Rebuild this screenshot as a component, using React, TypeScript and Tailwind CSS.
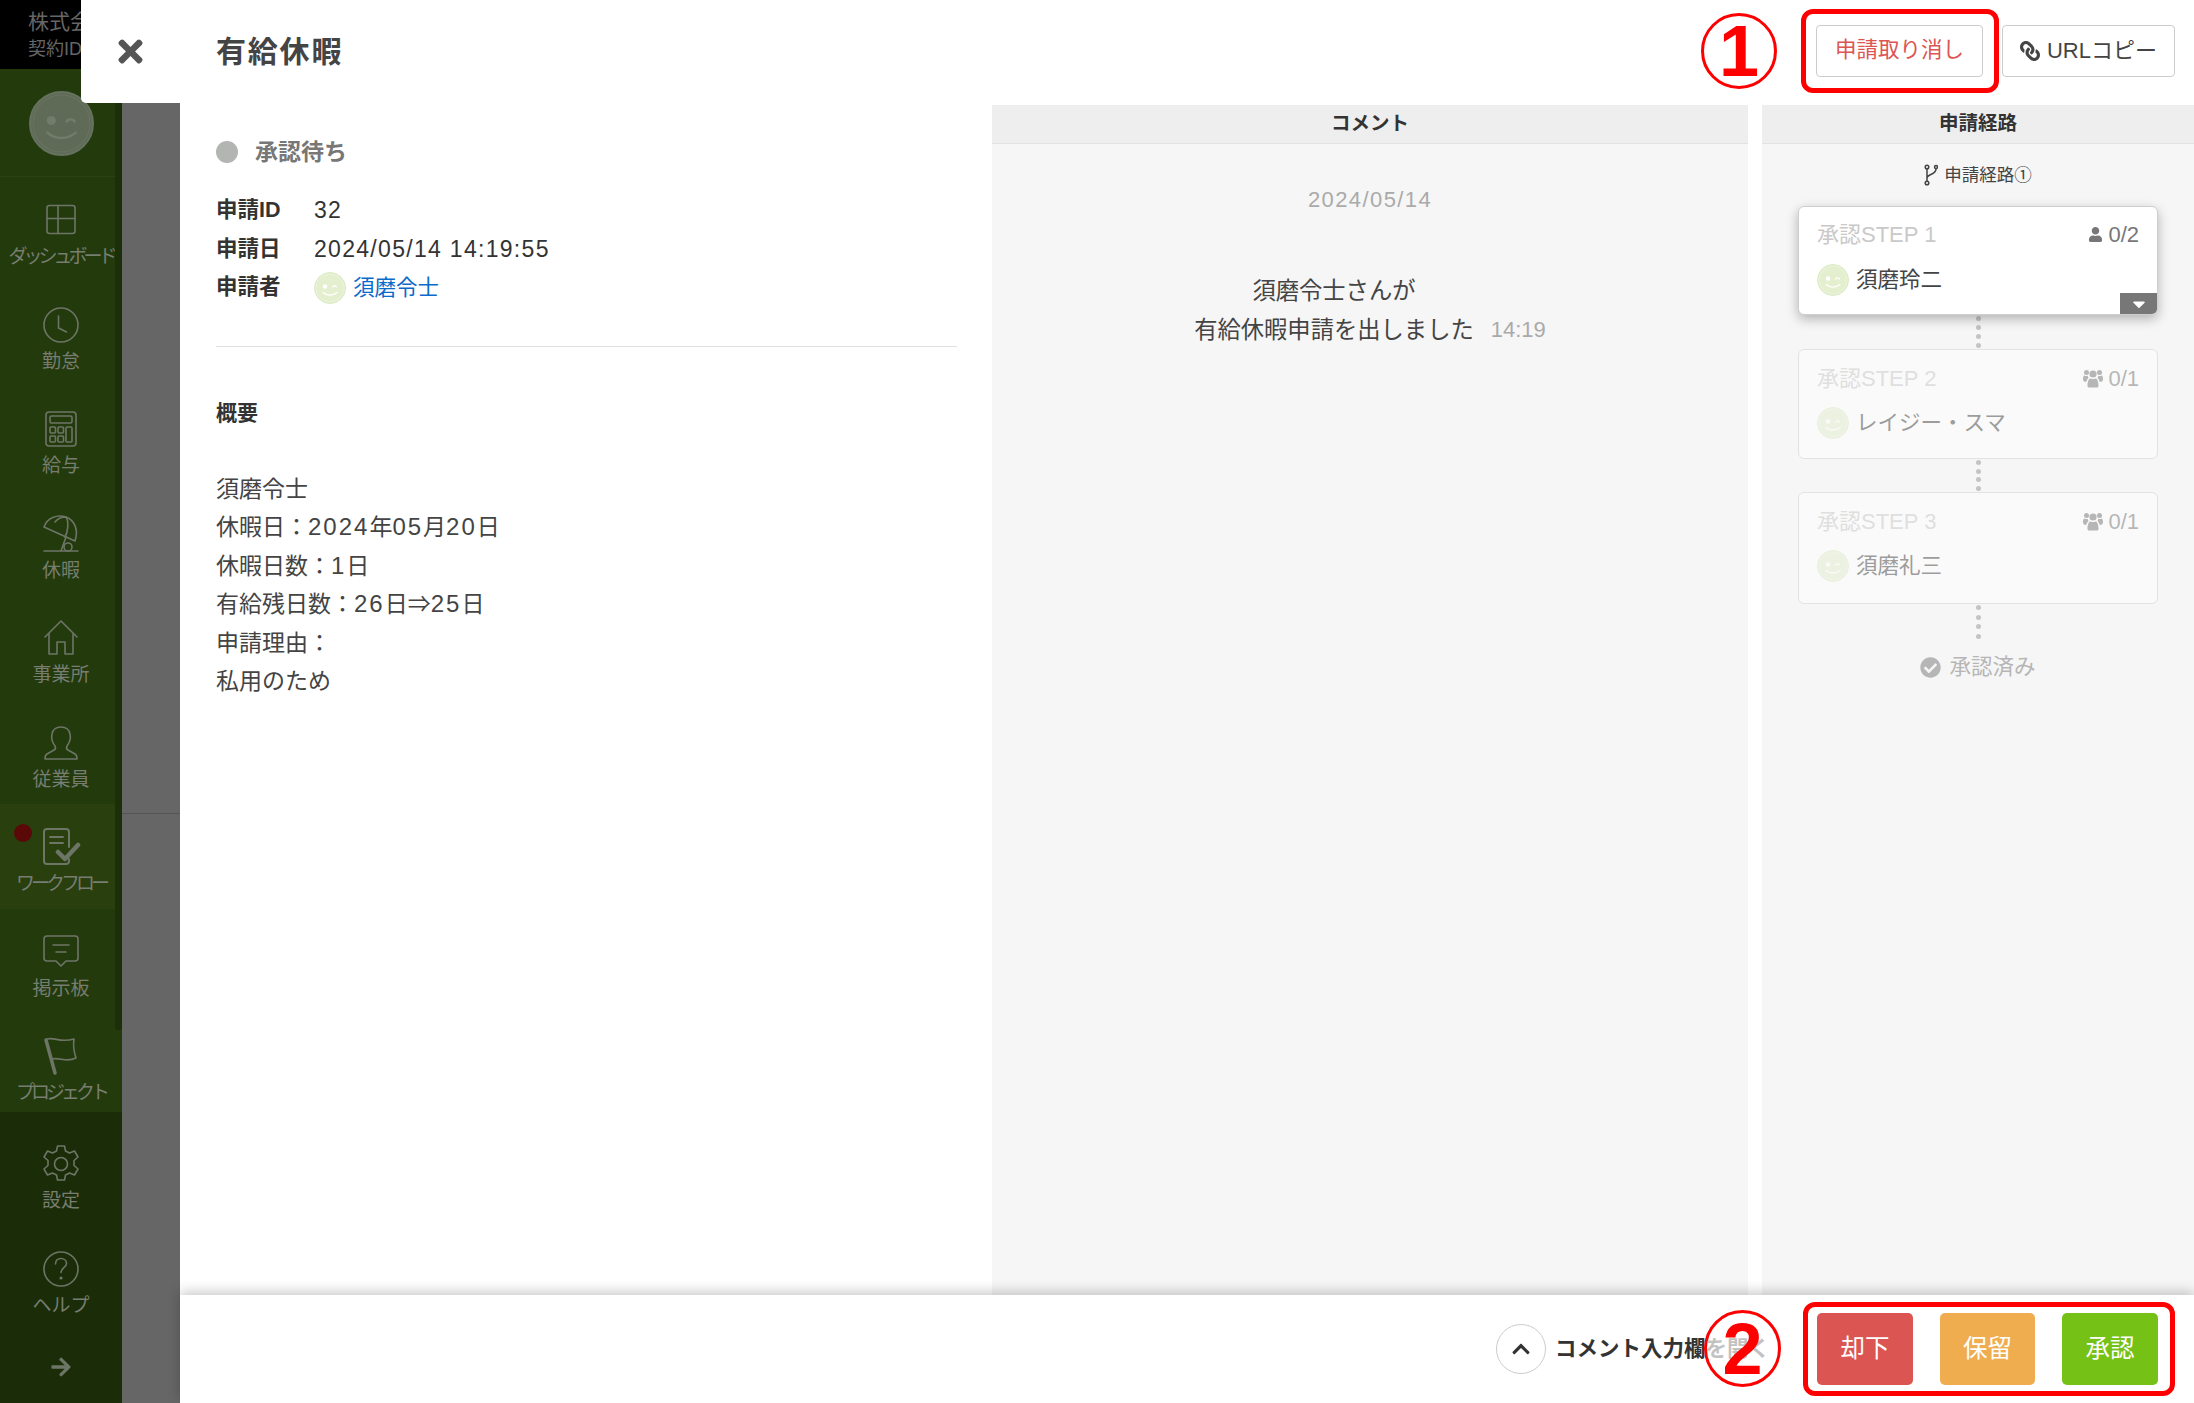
import { FaTimes, FaLink, FaUser, FaCheckCircle, FaChevronUp, FaArrowRight, FaCaretDown } from "react-icons/fa";

function Smile({ size, light = false }: { size: number; light?: boolean }) {
  const bg = light ? "#e4efcf" : "#5f6b57";
  const ring = light ? "#dcebc4" : "#667260";
  const fg = light ? "#ffffff" : "#717c6a";
  return (
    <svg width={size} height={size} viewBox="0 0 64 64" className="shrink-0">
      <circle cx="32" cy="32" r="31" fill={bg} stroke={ring} strokeWidth="2" />
      <circle cx="32" cy="32" r="28" fill="none" stroke={fg} strokeWidth="1" opacity="0.5" />
      <circle cx="22" cy="29" r="4.5" fill={fg} />
      <path d="M37 30c2-3 6-3 8 0" fill="none" stroke={fg} strokeWidth="2.5" strokeLinecap="round" />
      <path d="M18 41c8 7 20 7 28 0" fill="none" stroke={fg} strokeWidth="2.5" strokeLinecap="round" />
    </svg>
  );
}

function Users() {
  return (
    <svg width="20" height="19" viewBox="0 0 20 19" fill="currentColor">
      <circle cx="10" cy="5" r="3.600" />
      <path d="M4.500 17c0-5 1.500-7.500 3-7.500 1 .8 4 .8 5 0 1.500 0 3 2.500 3 7.500 0 1-1 1.500-2 1.500H6.500c-1 0-2-.5-2-1.500Z" />
      <circle cx="3.500" cy="3.500" r="2.500" />
      <circle cx="16.500" cy="3.500" r="2.500" />
      <path d="M0 10c0-2 .7-3.500 1.500-3.500.8.600 2.500.6 3.300.3-.1 1 .2 1.800.8 2.300C4.500 9.800 3.500 11.500 3.300 13 1 13 0 12 0 10Z" />
      <path d="M20 10c0-2-.7-3.500-1.500-3.500-.8.600-2.500.6-3.300.3.100 1-.2 1.800-.8 2.300 1.100.7 2.100 2.400 2.300 3.900 2.300 0 3.300-1 3.300-3Z" />
    </svg>
  );
}

const ic = { fill: "none", stroke: "#6d7567", strokeWidth: 1.6, strokeLinecap: "round" as const, strokeLinejoin: "round" as const };

const icons: Record<string, React.ReactNode> = {
  dash: (
    <svg width="40" height="40" viewBox="0 0 40 40" {...ic}>
      <rect x="6" y="5.5" width="28" height="28" rx="2.5" />
      <path d="M17 5.5v13M6 18.5h28M17 18.5v15" />
    </svg>
  ),
  clock: (
    <svg width="40" height="40" viewBox="0 0 40 40" {...ic}>
      <circle cx="20" cy="20" r="17" />
      <path d="M17.5 11v12l8 4" />
    </svg>
  ),
  calc: (
    <svg width="40" height="40" viewBox="0 0 40 40" {...ic}>
      <rect x="5" y="3" width="30" height="34" rx="3" />
      <rect x="9" y="7" width="22" height="7" rx="1.5" />
      <rect x="9" y="18" width="5.5" height="6" rx="1" />
      <rect x="17" y="18" width="5.5" height="6" rx="1" />
      <rect x="9" y="27" width="5.5" height="6" rx="1" />
      <rect x="17" y="27" width="5.5" height="6" rx="1" />
      <rect x="25" y="18" width="6" height="15" rx="1" />
    </svg>
  ),
  beach: (
    <svg width="40" height="40" viewBox="0 0 40 40" {...ic}>
      <path d="M3 13C6 4 16 0 25 3c8 3 13 12 9 24Z" />
      <path d="M14 8c3-4 8-5 11-5 3 4 2 15-1 20M20 37l5-14M3 37h34" />
      <circle cx="27" cy="33" r="4" />
    </svg>
  ),
  home: (
    <svg width="40" height="40" viewBox="0 0 40 40" {...ic}>
      <path d="M4 19 20 3l16 16" />
      <path d="M8 16v20h8V24h8v12h8V16" />
    </svg>
  ),
  user: (
    <svg width="40" height="40" viewBox="0 0 40 40" {...ic}>
      <path d="M14 23c-3-4-4-8-3-12 1-5 5-7 9-7s8 2 9 7c1 4 0 8-3 12-1 2-1 3 1 4l7 4c2 1 2 3 2 5H4c0-2 0-4 2-5l7-4c2-1 2-2 1-4Z" />
    </svg>
  ),
  flow: (
    <svg width="40" height="40" viewBox="0 0 40 40" fill="none" stroke="#6d7567" strokeLinecap="round" strokeLinejoin="round">
      <path d="M28 20V5a3 3 0 0 0-3-3H6a3 3 0 0 0-3 3v29a3 3 0 0 0 3 3h19a3 3 0 0 0 3-3v-2" strokeWidth="2" />
      <path d="M9 10h13M9 16h13" strokeWidth="2" />
      <path d="M17 25l7 7 13-14" strokeWidth="4.500" />
    </svg>
  ),
  board: (
    <svg width="40" height="40" viewBox="0 0 40 40" {...ic}>
      <path d="M6 4h28a3 3 0 0 1 3 3v19a3 3 0 0 1-3 3H25l-5 5-5-5H6a3 3 0 0 1-3-3V7a3 3 0 0 1 3-3Z" />
      <path d="M12 13h16M15 20h10" />
    </svg>
  ),
  flag: (
    <svg width="40" height="40" viewBox="0 0 40 40" fill="none" stroke="#6d7567" strokeLinecap="round" strokeLinejoin="round">
      <path d="M5 4l9 33" strokeWidth="3.500" />
      <path d="M6 3c8-2 13 4 27 0-1 6 0 13 2 19-10 5-16-1-24 1" strokeWidth="1.600" />
    </svg>
  ),
  gear: (
    <svg width="40" height="40" viewBox="0 0 40 40" {...ic}>
      <circle cx="20" cy="20" r="6.500" />
      <path d="M16.500 2h7l1 5 4 2 5-2 3.500 6-4 3.500v5l4 3.500-3.500 6-5-2-4 2-1 5h-7l-1-5-4-2-5 2-3.500-6 4-3.500v-5l-4-3.500 3.500-6 5 2 4-2z" />
    </svg>
  ),
  help: (
    <svg width="40" height="40" viewBox="0 0 40 40" {...ic}>
      <circle cx="20" cy="20" r="17" />
      <path d="M14.500 15c0-3.500 2.500-5.500 5.500-5.500s5.500 2 5.500 5c0 4-5.500 4.500-5.500 9" />
      <circle cx="20" cy="29" r="0.8" />
    </svg>
  ),
};

function NavItem({ icon, label, squeeze = false, active = false, dot = false }: { icon: string; label: string; squeeze?: boolean; active?: boolean; dot?: boolean }) {
  return (
    <div className={`relative h-[104.5px] shrink-0 flex flex-col items-center pl-[7px] pt-[23px] gap-[5px] ${active ? "bg-[#293f0e]" : ""}`}>
      {dot && <span className="absolute left-[14px] top-[20px] w-[18px] h-[18px] rounded-full bg-[#5a0808]" />}
      {icons[icon]}
      <span className={`text-[19px] leading-[24px] whitespace-nowrap text-[#777d70] ${squeeze ? "tracking-[-4px]" : ""}`}>{label}</span>
    </div>
  );
}

function Dots({ h, n = 4 }: { h: string; n?: number }) {
  return (
    <div className={`${h} flex flex-col items-center justify-between py-[1px]`}>
      {Array.from({ length: n }).map((_, i) => (
        <span key={i} className="w-[5px] h-[5px] rounded-full bg-[#c4c4c4]" />
      ))}
    </div>
  );
}

function Step({ title, count, name, group, faint, h }: { title: string; count: string; name: string; group?: boolean; faint?: boolean; h: string }) {
  return (
    <div className={`${h} w-[360px] relative bg-white rounded-[6px] border border-[#cfcfcf] px-[18px] ${faint ? "opacity-50 pt-[15px]" : "pt-[14px] shadow-[0_4px_12px_rgba(0,0,0,0.28)]"}`}>
      <div className="flex items-center justify-between h-[26px]">
        <span className="text-[22px] text-[#c9c9c9] whitespace-nowrap">{title}</span>
        <span className="flex items-center gap-[5px] text-[22px] text-[#777]">
          {group ? <Users /> : <FaUser size={15} />}
          {count}
        </span>
      </div>
      <div className={`flex items-center gap-[7px] ${faint ? "mt-[16px]" : "mt-[17px]"}`}>
        <Smile size={32} light />
        <span className="text-[21.500px] text-[#444] whitespace-nowrap">{name}</span>
      </div>
      {!faint && (
        <span className="absolute right-0 bottom-0 w-[37px] h-[21px] bg-[#777] rounded-br-[5px] flex items-center justify-center text-white">
          <FaCaretDown size={20} />
        </span>
      )}
    </div>
  );
}

function BodyLine({ text }: { text: string }) {
  return (
    <p>
      {text.split(/(\d+)/).map((part, i) =>
        i % 2 === 1 ? (
          <span key={i} className="text-[24px] tracking-[2px]">
            {part}
          </span>
        ) : (
          <span key={i}>{part}</span>
        ),
      )}
    </p>
  );
}

export default function App() {
  const body = ["須磨令士", "休暇日：2024年05月20日", "休暇日数：1日", "有給残日数：26日⇒25日", "申請理由：", "私用のため"];
  return (
    <div className="relative w-[2194px] h-[1403px] overflow-hidden flex bg-white text-[#333] font-['Liberation_Sans','Noto_Sans_CJK_JP',sans-serif]">
      {/* sidebar */}
      <aside className="relative w-[122px] shrink-0 flex flex-col bg-[#1a2d08]">
        <div className="h-[69px] bg-black pl-[28px] pt-[8px] text-[#666] overflow-hidden">
          <div className="text-[21px] leading-[28px] whitespace-nowrap">株式会社</div>
          <div className="text-[18px] leading-[26px] whitespace-nowrap">契約ID</div>
        </div>
        <div className="h-[1043px] shrink-0 bg-[#233a0c] w-full">
          <div className="h-[108px] flex pl-[29px] pt-[22px] border-b border-[#2c4216] w-[115px]">
            <Smile size={65} />
          </div>
          <div className="w-[115px]">
            <NavItem icon="dash" label="ダッシュボード" squeeze />
            <NavItem icon="clock" label="勤怠" />
            <NavItem icon="calc" label="給与" />
            <NavItem icon="beach" label="休暇" />
            <NavItem icon="home" label="事業所" />
            <NavItem icon="user" label="従業員" />
            <NavItem icon="flow" label="ワークフロー" squeeze active dot />
            <NavItem icon="board" label="掲示板" />
            <NavItem icon="flag" label="プロジェクト" squeeze />
          </div>
        </div>
        <div className="w-[115px] pt-[9px]">
          <NavItem icon="gear" label="設定" />
          <NavItem icon="help" label="ヘルプ" />
          <div className="flex justify-center pl-[7px] pt-[26px] text-[#6d7567]">
            <FaArrowRight size={22} />
          </div>
        </div>
        <span className="absolute right-0 top-[103px] w-[7px] h-[927px] bg-[#1b2f09] rounded-b-[3px]" />
      </aside>

      {/* backdrop */}
      <div className="w-[58px] shrink-0 bg-[#666666]">
        <div className="h-[814px] border-b border-[#555]" />
      </div>

      {/* close tab */}
      <div className="absolute left-[81px] top-0 w-[99px] h-[103px] bg-white rounded-bl-[5px] flex items-center justify-center text-[#555]">
        <FaTimes size={35} className="-mt-[1px]" />
      </div>

      {/* panel */}
      <main className="flex-1 min-w-0 flex flex-col bg-white">
        <header className="h-[105px] shrink-0 flex items-center justify-between pl-[36px] pr-[19px]">
          <h1 className="text-[30px] font-bold tracking-[1.800px] text-[#444] -mt-[2px]">有給休暇</h1>
          <div className="flex items-center gap-[19px] -mt-[4px]">
            <button className="w-[167px] h-[52px] bg-white border border-[#ccc] rounded-[4px] text-[21.500px] text-[#dc5553]">申請取り消し</button>
            <button className="w-[173px] h-[52px] bg-white border border-[#ccc] rounded-[4px] text-[22px] text-[#444] flex items-center justify-center gap-[7px]">
              <FaLink size={20} className="-scale-x-100" />
              URLコピー
            </button>
          </div>
        </header>

        <div className="flex-1 min-h-0 flex">
          {/* details */}
          <section className="w-[812px] shrink-0 pl-[36px] pr-[35px]">
            <div className="flex items-center gap-[17px] h-[30px] mt-[32px]">
              <span className="w-[22px] h-[22px] rounded-full bg-[#b3b5b3]" />
              <span className="text-[23px] font-bold text-[#777]">承認待ち</span>
            </div>
            <dl className="mt-[24px] text-[21.500px] leading-[38.500px] pb-[38px] border-b border-[#e0e0e0]">
              <div className="flex">
                <dt className="w-[98px] font-bold">申請ID</dt>
                <dd className="text-[23px] tracking-[1.300px]">32</dd>
              </div>
              <div className="flex">
                <dt className="w-[98px] font-bold">申請日</dt>
                <dd className="text-[23px] tracking-[1.300px]">2024/05/14 14:19:55</dd>
              </div>
              <div className="flex">
                <dt className="w-[98px] font-bold">申請者</dt>
                <dd className="flex items-center gap-[7px] pt-[1px]">
                  <Smile size={32} light />
                  <span className="text-[#0b6bcb]">須磨令士</span>
                </dd>
              </div>
            </dl>
            <h2 className="mt-[51px] text-[21px] leading-[30px] font-bold">概要</h2>
            <div className="mt-[42px] text-[23px] leading-[38.500px] text-[#444]">
              {body.map((t) => (
                <BodyLine key={t} text={t} />
              ))}
            </div>
          </section>

          {/* comments */}
          <section className="w-[756px] shrink-0 bg-[#f6f6f6] flex flex-col items-center">
            <div className="w-full h-[39px] bg-[#eeeeee] border-b border-[#e2e2e2] flex items-center justify-center text-[19.500px] font-bold">コメント</div>
            <div className="mt-[41px] text-[22px] tracking-[1.400px] leading-[30px] text-[#aaa]">2024/05/14</div>
            <div className="mt-[57px] flex items-end gap-[17px]">
              <div className="text-center text-[23.300px] leading-[38.500px] text-[#444]">
                <p>須磨令士さんが</p>
                <p>有給休暇申請を出しました</p>
              </div>
              <span className="text-[22px] leading-[38.500px] text-[#aaa]">14:19</span>
            </div>
          </section>

          <div className="w-[14px] shrink-0" />

          {/* route */}
          <section className="flex-1 min-w-0 bg-[#f6f6f6] flex flex-col">
            <div className="w-full h-[39px] shrink-0 bg-[#eeeeee] border-b border-[#e2e2e2] flex items-center justify-center text-[19.500px] font-bold">申請経路</div>
            <div className="h-[62px] shrink-0 flex items-center justify-center gap-[6px] text-[17.500px] text-[#444]">
              <svg width="14" height="22" viewBox="0 0 14 22" fill="none" stroke="#444" strokeWidth="1.500">
                <circle cx="3" cy="3" r="1.800" />
                <circle cx="3" cy="19" r="1.800" />
                <circle cx="12" cy="3" r="1.500" />
                <path d="M3 5v12M3 14c0-4 9-3 9-9" />
              </svg>
              申請経路①
            </div>
            <div className="pl-[36px] w-[396px] flex flex-col items-center">
              <Step h="h-[109px]" title="承認STEP 1" count="0/2" name="須磨玲二" />
              <Dots h="h-[34px]" />
              <Step h="h-[110px]" faint group title="承認STEP 2" count="0/1" name="レイジー・スマ" />
              <Dots h="h-[33px]" />
              <Step h="h-[112px]" faint group title="承認STEP 3" count="0/1" name="須磨礼三" />
              <Dots h="h-[36px]" />
              <div className="mt-[11px] flex items-center gap-[8px] text-[21.500px] text-[#777] opacity-50">
                <FaCheckCircle size={21} />
                承認済み
              </div>
            </div>
          </section>
        </div>

        <footer className="relative h-[108px] shrink-0 bg-white shadow-[0_-3px_12px_rgba(0,0,0,0.22)] flex items-center justify-end pr-[36px]">
          <div className="flex items-center gap-[9px] mr-[47px]">
            <span className="w-[50px] h-[50px] rounded-full border border-[#ccc] flex items-center justify-center text-[#333]">
              <FaChevronUp size={20} />
            </span>
            <span className="text-[21.500px] font-bold whitespace-nowrap">コメント入力欄を開く</span>
          </div>
          <div className="flex gap-[27px]">
            <button className="w-[96px] h-[72px] rounded-[5px] bg-[#db5553] text-white text-[24.500px]">却下</button>
            <button className="w-[95px] h-[72px] rounded-[5px] bg-[#f0ad50] text-white text-[24.500px]">保留</button>
            <button className="w-[96px] h-[72px] rounded-[5px] bg-[#76c116] text-white text-[24.500px]">承認</button>
          </div>
        </footer>
      </main>

      {/* red annotations */}
      <div className="absolute left-[1701px] top-[13px] w-[76px] h-[76px] rounded-full border-[3px] border-[#ff0000] flex items-center justify-center text-[#ff0000] text-[72px] leading-none font-bold">1</div>
      <div className="absolute left-[1801px] top-[9px] w-[198px] h-[84px] rounded-[12px] border-[5px] border-[#ff0000]" />
      <div className="absolute left-[1704px] top-[1310px] w-[77px] h-[77px] rounded-full border-[3px] border-[#ff0000] bg-white/70 flex items-center justify-center text-[#ff0000] text-[72px] leading-none font-bold">2</div>
      <div className="absolute left-[1803px] top-[1302px] w-[372px] h-[94px] rounded-[12px] border-[5px] border-[#ff0000]" />
    </div>
  );
}
